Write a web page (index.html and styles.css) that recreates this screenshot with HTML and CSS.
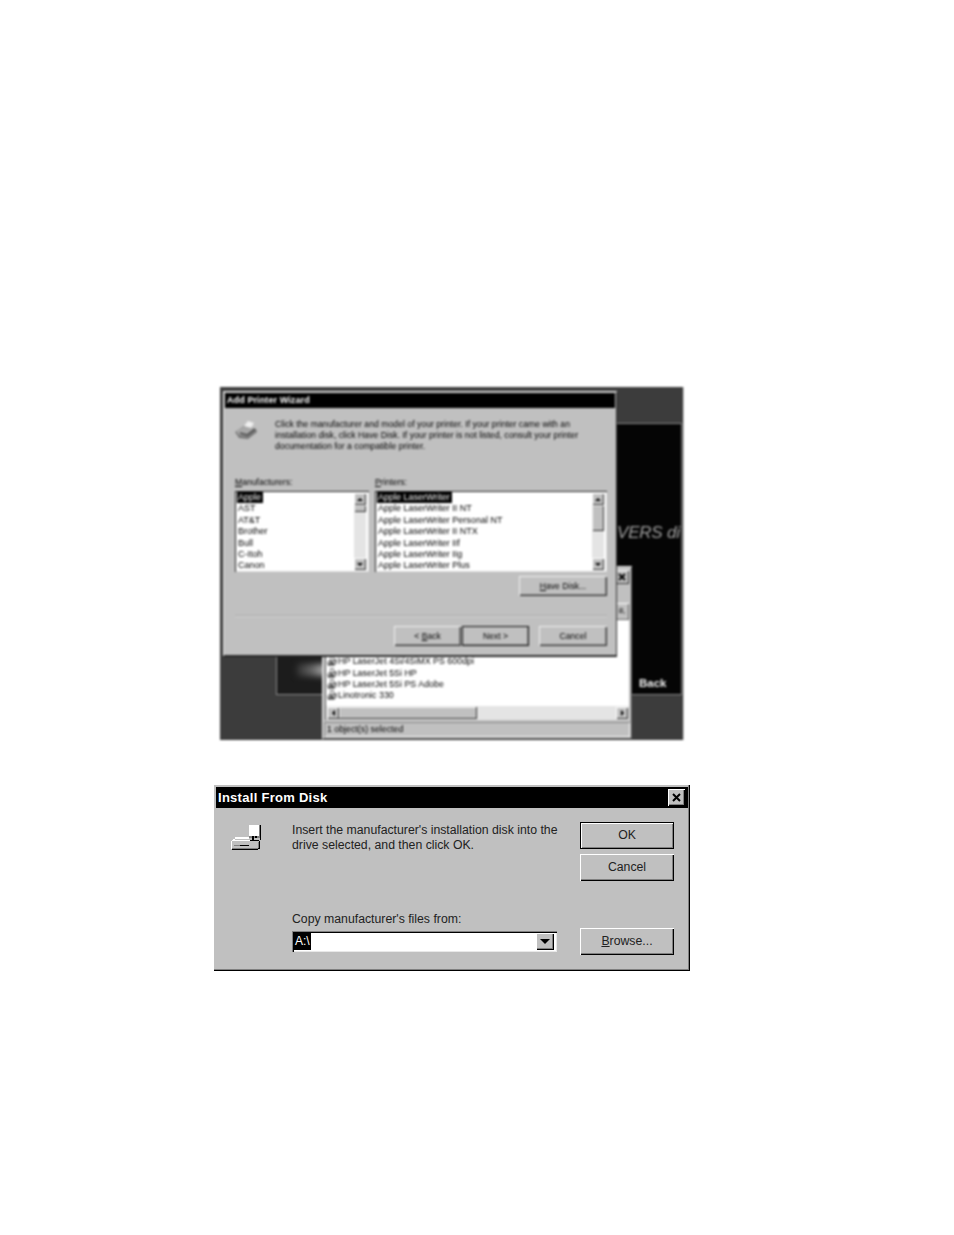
FILE: index.html
```html
<!DOCTYPE html>
<html lang="en">
<head>
<meta charset="utf-8">
<title>Add Printer Wizard</title>
<link rel="stylesheet" href="styles.css">
</head>
<body>
<main class="page">
  <figure class="shot">
    <div class="panel">
      <div class="panel-dim"></div>
      <div class="panel-glow"></div>
      <span class="panel-title">VERS di</span>
      <span class="panel-back">Back</span>
    </div>

    <section class="explorer">
      <div class="explorer-top">
        <span class="mini-close">
          <svg viewBox="0 0 8 8" class="x-icon"><path d="M1 1 7 7M7 1 1 7"/></svg>
        </span>
      </div>
      <div class="explorer-tool"><span class="tool-btn">8,</span></div>
      <div class="explorer-list">
        <ul class="file-list">
          <li class="file"><svg class="file-icon" viewBox="0 0 10 10"><path class="fi-a" d="M3 0h4v3h3v4L7 10H1L0 6l3-2z"/><path class="fi-b" d="M4 1h2v3H4zM1 6h7v1H1z"/><path class="fi-c" d="M1 8h6M2 5l5 3"/></svg>HP LaserJet 4Si/4SiMX PS 600dpi</li>
          <li class="file"><svg class="file-icon" viewBox="0 0 10 10"><path class="fi-a" d="M3 0h4v3h3v4L7 10H1L0 6l3-2z"/><path class="fi-b" d="M4 1h2v3H4zM1 6h7v1H1z"/><path class="fi-c" d="M1 8h6M2 5l5 3"/></svg>HP LaserJet 5Si HP</li>
          <li class="file"><svg class="file-icon" viewBox="0 0 10 10"><path class="fi-a" d="M3 0h4v3h3v4L7 10H1L0 6l3-2z"/><path class="fi-b" d="M4 1h2v3H4zM1 6h7v1H1z"/><path class="fi-c" d="M1 8h6M2 5l5 3"/></svg>HP LaserJet 5Si PS Adobe</li>
          <li class="file"><svg class="file-icon" viewBox="0 0 10 10"><path class="fi-a" d="M3 0h4v3h3v4L7 10H1L0 6l3-2z"/><path class="fi-b" d="M4 1h2v3H4zM1 6h7v1H1z"/><path class="fi-c" d="M1 8h6M2 5l5 3"/></svg>Linotronic 330</li>
        </ul>
        <div class="hbar">
          <span class="sb-btn"><i class="arrow arrow-left"></i></span>
          <span class="hbar-thumb"></span>
          <span class="hbar-track"></span>
          <span class="sb-btn"><i class="arrow arrow-right"></i></span>
        </div>
      </div>
      <div class="status">1 object(s) selected</div>
    </section>

    <section class="wizard">
      <header class="wiz-title">Add Printer Wizard</header>
      <div class="wiz-intro">
        <svg class="wiz-icon" viewBox="0 0 24 20">
          <path class="pr-shadow" d="M1 12 10 6l12 3 1 3-9 7-9-1z"/>
          <path class="pr-body" d="M2 11 11 6l10 3-8 7-8-1z"/>
          <path class="pr-paper" d="M10 6 14 1l6 2-3 5z"/>
          <path class="pr-dark" d="M6 13l7 2 8-6"/>
        </svg>
        <p class="wiz-text">Click the manufacturer and model of your printer. If your printer came with an<br>installation disk, click Have Disk. If your printer is not listed, consult your printer<br>documentation for a compatible printer.</p>
      </div>
      <div class="wiz-columns">
        <div class="col col-left">
          <label class="col-label"><u>M</u>anufacturers:</label>
          <div class="listbox">
            <ul class="items">
              <li><span class="sel">Apple</span></li>
              <li>AST</li>
              <li>AT&amp;T</li>
              <li>Brother</li>
              <li>Bull</li>
              <li>C-Itoh</li>
              <li>Canon</li>
            </ul>
            <div class="vbar">
              <span class="sb-btn"><i class="arrow arrow-up"></i></span>
              <span class="vbar-thumb vbar-thumb-small"></span>
              <span class="vbar-track"></span>
              <span class="sb-btn"><i class="arrow arrow-down"></i></span>
            </div>
          </div>
        </div>
        <div class="col col-right">
          <label class="col-label"><u>P</u>rinters:</label>
          <div class="listbox">
            <ul class="items">
              <li><span class="sel">Apple LaserWriter</span></li>
              <li>Apple LaserWriter II NT</li>
              <li>Apple LaserWriter Personal NT</li>
              <li>Apple LaserWriter II NTX</li>
              <li>Apple LaserWriter IIf</li>
              <li>Apple LaserWriter IIg</li>
              <li>Apple LaserWriter Plus</li>
            </ul>
            <div class="vbar">
              <span class="sb-btn"><i class="arrow arrow-up"></i></span>
              <span class="vbar-thumb vbar-thumb-big"></span>
              <span class="vbar-track"></span>
              <span class="sb-btn"><i class="arrow arrow-down"></i></span>
            </div>
          </div>
        </div>
      </div>
      <div class="wiz-havedisk"><button class="wbtn wbtn-have"><u>H</u>ave Disk...</button></div>
      <hr class="wiz-rule">
      <div class="wiz-nav">
        <button class="wbtn">&lt; <u>B</u>ack</button>
        <button class="wbtn wbtn-default">Next &gt;</button>
        <button class="wbtn wbtn-cancel">Cancel</button>
      </div>
    </section>
    <span class="shot-edge"></span>
  </figure>

  <section class="dialog">
    <header class="dlg-title">
      <span>Install From Disk</span>
      <span class="dlg-close"><svg viewBox="0 0 9 9" class="dlg-x"><path d="M1 1 8 8M8 1 1 8"/></svg></span>
    </header>
    <div class="dlg-body">
      <svg class="dlg-icon" viewBox="0 0 32 28" shape-rendering="crispEdges">
        <path fill="#808080" d="M19 1h12v13h-12z"/>
        <path fill="#fff" d="M19 1h10v11h-10z"/>
        <path fill="#000" d="M30 1h1v15h-1zM22 12h2v4h-2zM25 12h2v2h-2z"/>
        <path fill="#fff" d="M5 13h14v2H5zM3 15h2v2H3z"/>
        <path fill="#c0c0c0" d="M2 17h28v7H2z"/>
        <path fill="#fff" d="M2 16h20v1H2zM1 17h1v8H1z"/>
        <path fill="#808080" d="M2 24h26v1H2zM28 18h1v6h-1z"/>
        <path fill="#000" d="M2 25h26v1H2zM29 17h1v8h-1zM28 24h1v1h-1zM20 16h9v1H20z"/>
        <path fill="#000" d="M10 21h9v1h-9z"/>
        <path fill="#808080" d="M4 21h6v1H4z"/>
      </svg>
      <div class="dlg-main">
        <p class="dlg-text">Insert the manufacturer's installation disk into the<br>drive selected, and then click OK.</p>
        <div class="dlg-field">
          <label class="dlg-label">Copy manufacturer's files from:</label>
          <div class="combo">
            <span class="combo-sel">A:\</span>
            <span class="combo-btn"><i class="arrow arrow-down arrow-large"></i></span>
          </div>
        </div>
      </div>
      <div class="dlg-actions">
        <button class="dbtn dbtn-default">OK</button>
        <button class="dbtn">Cancel</button>
        <button class="dbtn dbtn-browse"><u>B</u>rowse...</button>
      </div>
    </div>
  </section>
</main>
</body>
</html>
```

FILE: styles.css
```css
* { box-sizing: border-box; }
html, body { margin: 0; padding: 0; background: #fff; }
ul { list-style: none; margin: 0; padding: 0; }
p { margin: 0; }
.page { height: 1235px; padding-top: 387px; font-family: "Liberation Sans", Arial, sans-serif; overflow: hidden; }

/* ---------- photographed desktop ---------- */
.shot {
  position: relative; margin: 0 0 0 220px; width: 464px; height: 353px;
  background: #3c3c3c; overflow: hidden; filter: blur(0.8px);
}
.shot-edge { position: absolute; right: 0; top: 0; bottom: 0; width: 1px; background: #d0d0d0; }
.panel {
  position: absolute; left: 56px; top: 36px; width: 406px; height: 272px;
  background: #050505; border: 1px solid #8c8c8c; border-right-color: #777; overflow: hidden;
}
.panel-dim { position: absolute; left: 0; top: 230px; width: 60px; height: 40px; background: #1c1c1c; }
.panel-glow {
  position: absolute; left: 20px; top: 240px; width: 30px; height: 12px;
  background: linear-gradient(90deg, #333 0%, #666 50%, #bbb 100%);
  filter: blur(3px);
}
.panel-title {
  position: absolute; left: 340px; top: 99px; font-size: 17px; font-style: italic;
  color: #a0a0a0; white-space: nowrap; letter-spacing: -0.2px;
}
.panel-back { position: absolute; left: 362px; top: 253px; font-size: 11.5px; font-weight: bold; color: #f0f0f0; }

/* back window */
.explorer {
  position: absolute; left: 102px; top: 179px; width: 310px; height: 173px;
  background: #c0c0c0; display: flex; flex-direction: column;
  box-shadow: inset 1px 1px #e8e8e8, inset -1px -1px #555;
  padding: 2px;
}
.explorer-top { height: 18px; display: flex; justify-content: flex-end; padding: 2px 1px 0 0; }
.mini-close {
  width: 15px; height: 14px; background: #c0c0c0; display: flex; align-items: center; justify-content: center;
  box-shadow: inset 1px 1px #fff, inset -1px -1px #333;
}
.x-icon { width: 8px; height: 8px; fill: none; stroke: #000; stroke-width: 1.9; }
.explorer-tool { height: 34px; display: flex; justify-content: flex-end; align-items: flex-end; padding-right: 1px; }
.tool-btn {
  width: 14px; height: 17px; font-size: 8px; color: #000; text-align: center; line-height: 15px;
  box-shadow: inset 1px 1px #fff, inset -1px -1px #666;
}
.explorer-list {
  flex: 1; background: #fff; margin: 0 1px 0 2px; display: flex; flex-direction: column; justify-content: flex-end;
  box-shadow: -1px 0 #555;
}
.file-list { padding: 0 0 5px 1px; }
.file { display: flex; align-items: center; height: 11.4px; font-size: 8.9px; color: #000; white-space: nowrap; }
.file-icon { width: 10px; height: 10px; margin-right: 1px; flex: none; }
.fi-a { fill: #888; }
.fi-b { fill: #eee; }
.fi-c { fill: none; stroke: #222; stroke-width: 1; }
.hbar { display: flex; height: 14px; background: #e4e4e4; padding: 1px; }
.hbar-thumb { width: 138px; background: #c0c0c0; box-shadow: inset -1px -1px #333, inset 1px 1px #eee; }
.hbar-track { flex: 1; }
.status {
  height: 15px; margin-top: 2px; font-size: 8.8px; line-height: 14px; color: #000; padding-left: 3px;
  box-shadow: inset 1px 1px #888, inset -1px -1px #eee;
}

/* scrollbar shared */
.sb-btn {
  width: 12px; height: 12px; background: #c0c0c0; display: flex; align-items: center; justify-content: center; flex: none;
  box-shadow: inset 1px 1px #fff, inset -1px -1px #333;
}
.arrow { display: block; width: 0; height: 0; border-style: solid; border-color: transparent; }
.arrow-up { border-width: 0 3px 3px; border-bottom-color: #000; }
.arrow-down { border-width: 3px 3px 0; border-top-color: #000; }
.arrow-left { border-width: 3px 3px 3px 0; border-right-color: #000; }
.arrow-right { border-width: 3px 0 3px 3px; border-left-color: #000; }
.arrow-large { border-width: 5px 5px 0; border-top-color: #000; }

/* wizard */
.wizard {
  position: absolute; left: 3px; top: 4px; width: 394px; height: 265px;
  background: #c0c0c0; padding: 2px; display: flex; flex-direction: column;
  box-shadow: inset 1px 1px #e4e4e4, inset -1px -1px #333, 0 1px 0 #222;
}
.wiz-title {
  height: 15px; background: #000; color: #fff; font-size: 9px; font-weight: bold;
  line-height: 15px; padding-left: 2px; letter-spacing: 0.1px; flex: none;
}
.wiz-intro { display: flex; height: 69px; padding: 11px 0 0 9px; flex: none; }
.wiz-icon { width: 24px; height: 20px; margin-right: 17px; margin-top: 1px; flex: none; }
.pr-shadow { fill: #777; }
.pr-body { fill: #a8a8a8; }
.pr-paper { fill: #f0f0f0; }
.pr-dark { fill: none; stroke: #444; stroke-width: 1.5; }
.wiz-text { font-size: 8.7px; line-height: 11px; color: #000; white-space: nowrap; }
.wiz-columns { display: flex; gap: 6px; padding-left: 10px; flex: none; }
.col-label { display: block; font-size: 8.6px; line-height: 11px; height: 11px; color: #000; margin-bottom: 3px; }
.col-left .listbox { width: 134px; }
.col-right .listbox { width: 232px; }
.listbox {
  height: 81px; background: #fff; display: flex; overflow: hidden; padding: 2px;
  box-shadow: inset 1px 1px #222, inset -1px -1px #ddd;
}
.items { flex: 1; min-width: 0; margin-top: -1px; }
.items li { height: 11.4px; line-height: 11.4px; font-size: 9px; color: #000; white-space: nowrap; padding-left: 1px; }
.sel { display: inline-block; background: #000; color: #eee; padding-right: 2px; margin-left: -1px; padding-left: 1px; }
.vbar { width: 12px; display: flex; flex-direction: column; background: #e4e4e4; flex: none; margin-right: 1px; }
.vbar-thumb { display: block; width: 12px; background: #c0c0c0; box-shadow: inset 1px 1px #eee, inset -1px -1px #333; flex: none; }
.vbar-thumb-small { height: 7px; }
.vbar-thumb-big { height: 26px; }
.vbar-track { flex: 1; }

.wbtn {
  font-family: inherit; font-size: 8.6px; color: #000; background: #c0c0c0; border: 0; padding: 0;
  width: 67px; height: 20px;
  box-shadow: inset 1px 1px #f0f0f0, inset -1px -1px #333, inset -2px -2px #888;
}
.wbtn-have { width: 88px; }
.wbtn-default { box-shadow: inset 0 0 0 1px #111, inset -2px -2px #888; width: 67px; }
.wbtn-cancel { width: 68px; margin-left: 9px; }
.wiz-havedisk { display: flex; justify-content: flex-end; padding: 4px 8px 0 0; flex: none; }
.wiz-rule { height: 2px; border: 0; margin: 19px 8px 0 10px; background: linear-gradient(#a8a8a8 50%, #d4d4d4 50%); flex: none; }
.wiz-nav { display: flex; justify-content: flex-end; gap: 1px; padding: 9px 8px 0 0; flex: none; }

/* install dialog */
.dialog {
  margin: 44px 0 0 213px; width: 477px; height: 187px; background: #c0c0c0; padding: 3px 2px 2px 3px;
  box-shadow: inset 1px 1px #fff, inset -1px -1px #000, inset -2px -2px #808080;
  display: flex; flex-direction: column;
}
.dlg-title {
  height: 21px; background: #000; color: #fff; font-size: 13px; font-weight: bold; letter-spacing: 0.28px;
  display: flex; justify-content: space-between; align-items: center; padding: 0 3px 0 2px; flex: none;
}
.dlg-close {
  width: 17px; height: 17px; background: #c0c0c0; display: flex; align-items: center; justify-content: center;
  box-shadow: inset 1px 1px #fff, inset -1px -1px #000, inset -2px -2px #808080;
}
.dlg-x { width: 9px; height: 9px; fill: none; stroke: #000; stroke-width: 2; }
.dlg-body { flex: 1; display: flex; padding: 14px 0 0 14px; }
.dlg-icon { width: 32px; height: 28px; margin: 2px 30px 0 0; flex: none; }
.dlg-main { width: 265px; display: flex; flex-direction: column; flex: none; }
.dlg-text { font-size: 12.28px; line-height: 15px; color: #222; white-space: nowrap; padding-top: 1px; }
.dlg-field { margin-top: 59px; }
.dlg-label { display: block; font-size: 12.28px; line-height: 15px; color: #222; margin-bottom: 4px; white-space: nowrap; }
.combo {
  width: 265px; height: 21px; background: #fff; display: flex; justify-content: space-between; padding: 2px;
  box-shadow: inset 1px 1px #808080, inset 2px 2px #000, inset -1px -1px #e8e8e8;
}
.combo-sel { background: #000; color: #fff; font-size: 12px; line-height: 17px; height: 17px; padding: 0 1px; }
.combo-btn {
  width: 18px; height: 17px; background: #c0c0c0; display: flex; align-items: center; justify-content: center; margin-right: 1px;
  box-shadow: inset 1px 1px #fff, inset -1px -1px #000, inset -2px -2px #808080;
}
.dlg-actions { width: 94px; margin-left: 23px; display: flex; flex-direction: column; gap: 5px; flex: none; }
.dbtn {
  width: 94px; height: 27px; border: 0; background: #c0c0c0; font-family: inherit; font-size: 12.28px; color: #222; padding: 0 0 2px;
  box-shadow: inset 1px 1px #fff, inset -1px -1px #000, inset -2px -2px #808080;
}
.dbtn-default { box-shadow: inset 0 0 0 1px #000, inset 2px 2px #fff, inset -2px -2px #808080; }
.dbtn-browse { margin-top: 42px; }
```
